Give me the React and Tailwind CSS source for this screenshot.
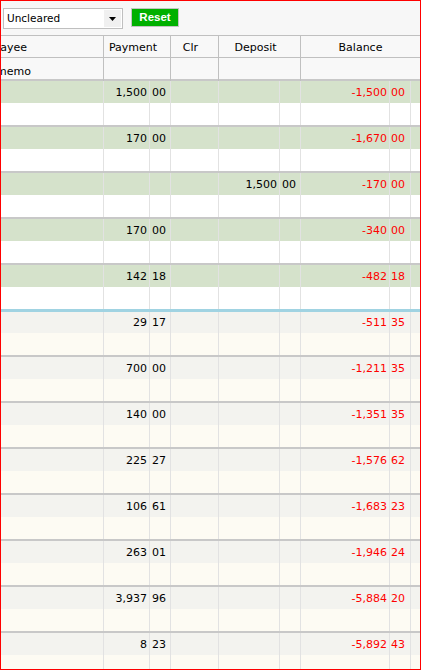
import React from "react";

const tx = [
  { p: ["1,500", "00"], d: null, b: ["-1,500", "00"] },
  { p: ["170", "00"], d: null, b: ["-1,670", "00"] },
  { p: null, d: ["1,500", "00"], b: ["-170", "00"] },
  { p: ["170", "00"], d: null, b: ["-340", "00"] },
  { p: ["142", "18"], d: null, b: ["-482", "18"] },
  { p: ["29", "17"], d: null, b: ["-511", "35"] },
  { p: ["700", "00"], d: null, b: ["-1,211", "35"] },
  { p: ["140", "00"], d: null, b: ["-1,351", "35"] },
  { p: ["225", "27"], d: null, b: ["-1,576", "62"] },
  { p: ["106", "61"], d: null, b: ["-1,683", "23"] },
  { p: ["263", "01"], d: null, b: ["-1,946", "24"] },
  { p: ["3,937", "96"], d: null, b: ["-5,884", "20"] },
  { p: ["8", "23"], d: null, b: ["-5,892", "43"] },
];

const cols =
  "grid grid-cols-[102px_46px_21px_48px_61px_21px_89px_21px_10px]";
const vl = "border-l border-[#e2e2e2]";

function Row({ first, tone, v, short }) {
  const h = short ? "h-[21px]" : "h-[22px]";
  const bg = first
    ? tone === "green"
      ? "bg-[#d5e2cb]"
      : "bg-[#f3f3ef]"
    : tone === "green"
    ? "bg-white"
    : "bg-[#fdfbf3]";
  return (
    <div className={`${cols} ${bg} ${h}`}>
      <div />
      <div className={`${vl} flex items-center justify-end pr-[2px] pt-[2px]`}>
        {first && v.p ? v.p[0] : ""}
      </div>
      <div className={`${vl} flex items-center pl-[2px] pt-[2px]`}>
        {first && v.p ? v.p[1] : ""}
      </div>
      <div className={vl} />
      <div className={`${vl} flex items-center justify-end pr-[2px] pt-[2px]`}>
        {first && v.d ? v.d[0] : ""}
      </div>
      <div className={`${vl} flex items-center pl-[2px] pt-[2px]`}>
        {first && v.d ? v.d[1] : ""}
      </div>
      <div
        className={`${vl} flex items-center justify-end pr-[2px] pt-[2px] text-[#ff0000]`}
      >
        {first ? v.b[0] : ""}
      </div>
      <div className={`${vl} flex items-center pl-[1px] pt-[2px] text-[#ff0000]`}>
        {first ? v.b[1] : ""}
      </div>
      <div className={vl} />
    </div>
  );
}

export default function App() {
  return (
    <div className="w-[421px] h-[670px] border border-[#ff0000] overflow-hidden bg-white font-['DejaVu_Sans',sans-serif] text-[11px] text-black">
      <div className="h-[34px] bg-[#f7f7f7] flex items-start pt-[7px] pl-[2px] gap-[8px]">
        <div className="w-[120px] h-[21px] border border-[#bfbfbf] bg-white flex items-stretch">
          <div className="flex-1 flex items-center pl-[3px] pt-px text-[10.5px]">
            Uncleared
          </div>
          <div className="w-[17px] my-[1px] mr-[1px] bg-[#f0f0f0] flex items-center justify-center">
            <svg width="7" height="4" viewBox="0 0 7 4">
              <path d="M0 0H7L3.5 4Z" fill="#000" />
            </svg>
          </div>
        </div>
        <div className="w-[48px] h-[19px] border border-[#c4c4c4] bg-[#00b000] flex items-center justify-center text-white font-bold font-['Liberation_Sans',sans-serif]">
          <span className="text-[11.5px]">Reset</span>
        </div>
      </div>
      <div className="border-t border-[#c0c0c0] bg-[#f8f8f8]">
        <div className="grid grid-cols-[102px_67px_48px_82px_120px] h-[22px] border-b border-[#c0c0c0]">
          <div className="flex items-center pt-[3px]">
            <span className="ml-[-7px] whitespace-nowrap">Payee</span>
          </div>
          <div className="border-l border-[#c0c0c0] flex items-center justify-center pr-[8px] pt-[3px]">
            Payment
          </div>
          <div className="border-l border-[#c0c0c0] flex items-center justify-center pr-[8px] pt-[3px]">
            Clr
          </div>
          <div className="border-l border-[#c0c0c0] flex items-center justify-center pr-[8px] pt-[3px]">
            Deposit
          </div>
          <div className="border-l border-[#c0c0c0] flex items-center justify-center pt-[3px]">
            Balance
          </div>
        </div>
        <div className="grid grid-cols-[102px_67px_48px_82px_120px] h-[21px]">
          <div className="flex items-center pt-[6px]">
            <span className="ml-[-5px] whitespace-nowrap">memo</span>
          </div>
          <div className="border-l border-[#c0c0c0]" />
          <div className="border-l border-[#c0c0c0]" />
          <div className="border-l border-[#c0c0c0]" />
          <div className="border-l border-[#c0c0c0]" />
        </div>
      </div>
      {tx.map((v, i) => {
        const tone = i < 5 ? "green" : "gray";
        const top =
          i === 5
            ? "border-t-[3px] border-[#a0d3e2]"
            : "border-t-2 border-[#c8c8c8]";
        return (
          <div key={i} className={top}>
            <Row first tone={tone} v={v} short={i === 5} />
            <Row first={false} tone={tone} v={v} />
          </div>
        );
      })}
    </div>
  );
}
